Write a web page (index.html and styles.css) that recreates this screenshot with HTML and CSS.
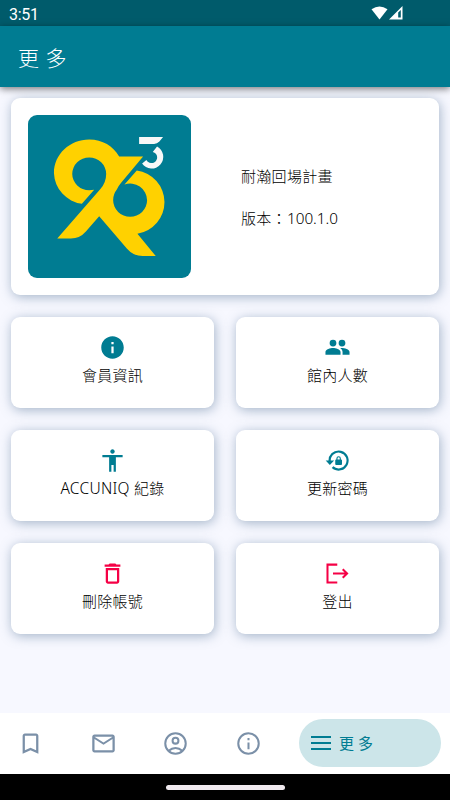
FILE: index.html
```html
<!DOCTYPE html>
<html lang="zh-Hant">
<head>
  <meta charset="UTF-8" />
  <meta name="viewport" content="width=device-width, initial-scale=1.0"/>
  <title>更多</title>
  <link rel="stylesheet" href="styles.css">
</head>
<body>
  <div class="status-bar">
    <span class="clock">3:51</span>
    <svg class="signals" width="34" height="16" viewBox="0 0 34 16">
      <path fill="#fff" d="M0.5 3.300 Q8.500 -2.300 16.500 3.300 L8.500 13.500 Z"/>
      <path fill="#fff" fill-rule="evenodd" d="M31.500 0 V13.500 H18 Z M27.200 6.500 L29.800 3.900 V11.500 H27.200 Z"/>
    </svg>
  </div>

  <header class="header">更 多</header>

  <main class="content">
    <section class="card about">
      <div class="logo-box">
        <svg class="logo" viewBox="23 30 490 490">
          <path fill="#ffd100" d="M185 297 A97 97 0 0 1 101 205 C101 148 149 104 207 104 C247 104 279 124 297 155 H369 L303 234 Q296 242 290 254 A51 51 0 0 0 279 286 A51 50 0 0 0 330 336 A51 50 0 0 0 381 286 A51 51 0 0 0 313 239 L350 197 A96 96 0 0 1 352 387 L407 454 H368 Q340 454 320 431 L237 334 L197 380 Q179 401 152 401 H111 L240 253 Q258 233 258 207 A51 49 0 0 0 207 158 A51 49 0 0 0 156 207 A51 49 0 0 0 207 256 L222 255 Z"/>
          <path fill="#f7f8f8" d="M357 96 H429 L418 110 Q411 117 402 117 H357 Z M411 125 A35 35 0 1 1 366 176 L379 165 A17 17 0 1 0 398 141 Z"/>
        </svg>
      </div>
      <div class="about-text">
        <div>耐瀚回場計畫</div>
        <div>版本：<span class="version">100.1.0</span></div>
      </div>
    </section>

    <div class="grid">
      <div class="card tile">
        <svg class="icon" viewBox="0 0 24 24"><path d="M12 2C6.48 2 2 6.48 2 12s4.48 10 10 10 10-4.48 10-10S17.52 2 12 2zm1 15h-2v-6h2v6zm0-8h-2V7h2v2z"/></svg>
        <span>會員資訊</span>
      </div>
      <div class="card tile">
        <svg class="icon" viewBox="0 0 24 24"><circle cx="8" cy="8" r="3"/><circle cx="16" cy="8" r="3"/><path d="M1.300 18.500V16c0-2.300 4.500-3.500 6.700-3.500s6.700 1.200 6.700 3.500v2.500zM16.500 18.500V16c0-1.500-.8-2.600-2-3.400 2.500-.4 8.200.8 8.200 3.400v2.500z"/></svg>
        <span>館內人數</span>
      </div>
      <div class="card tile">
        <svg class="icon" viewBox="0 0 24 24"><path d="M12 2c1.100 0 2 .9 2 2s-.9 2-2 2-2-.9-2-2 .9-2 2-2zm9 7h-6v13h-2v-6h-2v6H9V9H3V7h18v2z"/></svg>
        <span><span class="latin">ACCUNIQ</span> 紀錄</span>
      </div>
      <div class="card tile">
        <svg class="icon" viewBox="0 0 24 24"><path d="M13 3a9 9 0 0 0-9 9H1.500l3.700 4L9 12H6a7 7 0 1 1 2.300 5.200l-1.400 1.500A9 9 0 1 0 13 3z"/><path d="M15 11v-.8a2 2 0 0 0-4 0v.8c-.5 0-1 .4-1 .9v3.200c0 .5.5.9 1 .9h4c.5 0 1-.4 1-.9v-3.200c0-.5-.5-.9-1-.9zm-1 0h-2v-.8a1 1 0 0 1 2 0v.8z"/></svg>
        <span>更新密碼</span>
      </div>
      <div class="card tile">
        <svg class="icon danger" viewBox="0 0 24 24"><path d="M6 19c0 1.100.9 2 2 2h8c1.100 0 2-.9 2-2V7H6v12zM8 9h8v10H8V9zm7.500-5l-1-1h-5l-1 1H5v2h14V4z"/></svg>
        <span>刪除帳號</span>
      </div>
      <div class="card tile">
        <svg class="icon danger" viewBox="0 0 24 24"><path d="M2.200 3.200h9.600V5H4v14h7.800v1.800H2.200z"/><path d="M17.300 7.500L16 8.800l2.300 2.300H8v1.800h10.300L16 15.200l1.300 1.300 4.500-4.500z"/></svg>
        <span>登出</span>
      </div>
    </div>
  </main>

  <nav class="nav">
    <div class="nav-item">
      <svg class="icon" viewBox="0 0 24 24"><path d="M17 3H7c-1.100 0-2 .9-2 2v16l7-3 7 3V5c0-1.100-.9-2-2-2zm0 15l-5-2.180L7 18V5h10v13z"/></svg>
    </div>
    <div class="nav-item">
      <svg class="icon" viewBox="0 0 24 24"><path d="M22 6c0-1.100-.9-2-2-2H4c-1.100 0-2 .9-2 2v12c0 1.100.9 2 2 2h16c1.100 0 2-.9 2-2V6zm-2 0l-8 5-8-5h16zm0 12H4V8l8 5 8-5v10z"/></svg>
    </div>
    <div class="nav-item">
      <svg class="icon line" viewBox="0 0 24 24"><circle cx="12" cy="12" r="9.100"/><circle cx="12" cy="9.500" r="2.600"/><path d="M6 18.500Q8.700 16 12 16t6 2.500"/></svg>
    </div>
    <div class="nav-item">
      <svg class="icon line" viewBox="0 0 24 24"><circle cx="12" cy="12" r="9.100"/><path d="M12 7v2M12 11v6"/></svg>
    </div>
    <div class="nav-item active">
      <svg class="menu" width="20" height="14" viewBox="0 0 20 14"><path d="M0 1h20M0 7h20M0 13h20"/></svg>
      <span class="nav-label">更 多</span>
    </div>
  </nav>

  <div class="home-bar"><div class="handle"></div></div>
</body>
</html>
```
FILE: styles.css
```css
:root {
  --teal: #007c92;
  --teal-dark: #005b6b;
  --bg: #f7f8ff;
  --red: #f50045;
  --grey: #7b90a8;
}

* {
  box-sizing: border-box;
}

body {
  margin: 0;
  height: 800px;
  display: flex;
  flex-direction: column;
  overflow: hidden;
  background-color: var(--bg);
  color: #000;
  font-family: "Noto Sans", "Noto Sans CJK TC", sans-serif;
  font-size: 15px;
  font-weight: 300;
}

.status-bar {
  height: 26px;
  display: flex;
  justify-content: space-between;
  align-items: center;
  padding: 2px 45px 0 9px;
  background-color: var(--teal-dark);
  color: #fff;
}

.clock {
  font-family: Roboto, sans-serif;
  font-size: 16px;
  letter-spacing: -0.3px;
  font-weight: 400;
}

.header {
  height: 61px;
  padding-left: 18px;
  line-height: 64px;
  background-color: var(--teal);
  color: #fff;
  font-size: 21px;
  letter-spacing: 0.5px;
  box-shadow: 0 2px 7px rgba(0, 0, 0, 0.5);
}

.content {
  flex: 1;
  padding: 11px 11px 0;
}

.card {
  background-color: #fff;
  border-radius: 9px;
  box-shadow: 1px 2px 12px rgba(80, 112, 145, 0.5);
}

.about {
  height: 197px;
  display: flex;
  padding: 17px;
}

.logo-box {
  width: 163px;
  height: 163px;
  border-radius: 9px;
  background-color: var(--teal);
}

.logo {
  display: block;
  width: 100%;
  height: 100%;
}

.about-text {
  display: flex;
  flex-direction: column;
  gap: 21px;
  margin-left: 50px;
  padding-top: 51px;
  line-height: 21px;
  letter-spacing: 0.3px;
}

.latin {
  font-size: 15.5px;
}

.version {
  font-size: 15.3px;
  letter-spacing: 0;
}

.grid {
  display: grid;
  grid-template-columns: 1fr 1fr;
  grid-auto-rows: 91px;
  gap: 21.8px 22px;
  margin-top: 22px;
}

.tile {
  display: flex;
  flex-direction: column;
  align-items: center;
  padding-top: 17px;
  line-height: 28px;
  letter-spacing: 0.3px;
}

.icon {
  width: 27px;
  height: 27px;
  flex-shrink: 0;
  fill: var(--teal);
}

.danger {
  fill: var(--red);
}

.nav {
  height: 61px;
  display: flex;
  align-items: center;
  gap: 45.6px;
  padding: 0 9px 1px 17px;
  background-color: #fff;
}

.nav .icon {
  display: block;
  fill: var(--grey);
}

.nav .line {
  fill: none;
  stroke: var(--grey);
  stroke-width: 1.8;
}

.nav .active {
  width: 142px;
  height: 48px;
  display: flex;
  align-items: center;
  gap: 8px;
  margin-left: -8.4px;
  padding-left: 12px;
  border-radius: 24px;
  background-color: #cce5e9;
  color: var(--teal);
  font-weight: 400;
}

.nav-label {
  padding-bottom: 2px;
}

.menu {
  stroke: var(--teal);
  stroke-width: 2;
}

.home-bar {
  height: 26px;
  display: flex;
  justify-content: center;
  align-items: center;
  background-color: #000;
}

.handle {
  width: 119px;
  height: 5px;
  border-radius: 3px;
  background-color: #efe9ee;
}
```
